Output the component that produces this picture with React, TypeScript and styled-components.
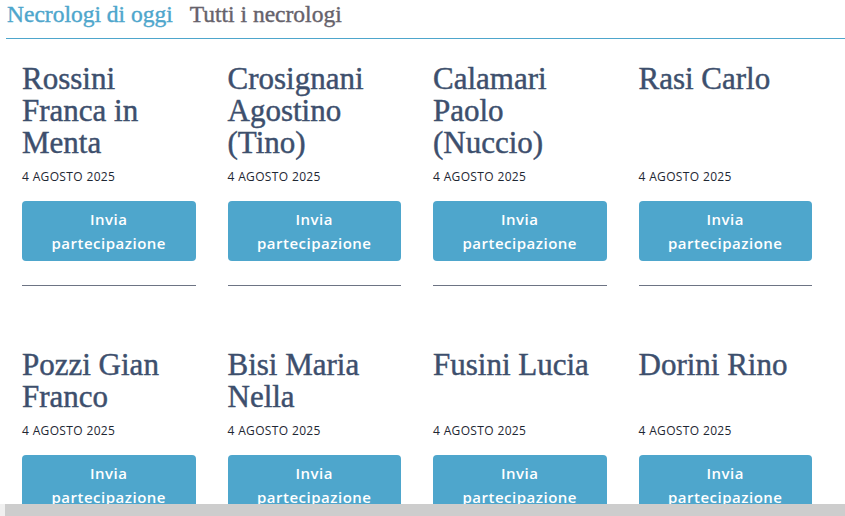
import React from "react";
import styled, { createGlobalStyle } from "styled-components";

const GlobalStyle = createGlobalStyle`
  html, body {
    margin: 0;
    padding: 0;
    background: #ffffff;
    overflow: hidden;
  }
  * {
    box-sizing: border-box;
  }
`;

const necrologi = [
  "Rossini Franca in Menta",
  "Crosignani Agostino (Tino)",
  "Calamari Paolo (Nuccio)",
  "Rasi Carlo",
  "Pozzi Gian Franco",
  "Bisi Maria Nella",
  "Fusini Lucia",
  "Dorini Rino",
];

const App = () => {
  return (
    <>
      <GlobalStyle />
      <Page>
        <Tabs>
          <Tab active>Necrologi di oggi</Tab>
          <Tab>Tutti i necrologi</Tab>
        </Tabs>
        <Grid>
          {necrologi.map((name) => (
            <Card key={name}>
              <Name>{name}</Name>
              <DateLabel>4 agosto 2025</DateLabel>
              <SendButton>Invia partecipazione</SendButton>
              <Divider />
            </Card>
          ))}
        </Grid>
      </Page>
      <ScrollBar>
        <ScrollCorner />
      </ScrollBar>
    </>
  );
};

const Page = styled.div`
  padding: 0 0 0 6px;
`;

const Tabs = styled.div`
  display: flex;
  align-items: baseline;
  gap: 17px;
  padding: 0 0 10px 1px;
  border-bottom: 1px solid #4ea6cc;
`;

const Tab = styled.span<{ active?: boolean }>`
  font-family: "Liberation Serif", "DejaVu Serif", serif;
  font-size: 23.5px;
  line-height: 28px;
  color: ${(p) => (p.active ? "#4ea6cc" : "#66626b")};
  -webkit-text-stroke: 0.4px ${(p) => (p.active ? "#4ea6cc" : "#66626b")};
  cursor: pointer;
`;

const Grid = styled.div`
  display: grid;
  grid-template-columns: repeat(4, 205.5px);
  row-gap: 63px;
  padding-top: 24px;
`;

const Card = styled.div`
  display: flex;
  flex-direction: column;
  padding: 0 16px;
`;

const Name = styled.h2`
  flex: 1;
  margin: 0 0 10px 0;
  font-family: "Liberation Serif", "DejaVu Serif", serif;
  font-weight: 400;
  font-size: 31px;
  line-height: 32px;
  color: #3d4f6d;
  -webkit-text-stroke: 0.45px #3d4f6d;
`;

const DateLabel = styled.div`
  font-family: "Open Sans", "Liberation Sans", sans-serif;
  font-size: 12px;
  line-height: 16px;
  letter-spacing: 0.35px;
  text-transform: uppercase;
  color: #1e2733;
  margin-bottom: 16px;
`;

const SendButton = styled.button`
  height: 60px;
  width: 100%;
  border: none;
  border-radius: 4px;
  background: #4ea6cc;
  color: #ffffff;
  font-family: "Open Sans", "Liberation Sans", sans-serif;
  font-weight: 600;
  font-size: 15px;
  line-height: 24px;
  letter-spacing: 0.5px;
  padding: 6px 20px;
  cursor: pointer;
`;

const Divider = styled.div`
  margin-top: 24px;
  border-top: 1px solid #6d7484;
`;

const ScrollBar = styled.div`
  position: fixed;
  left: 0;
  right: 0;
  bottom: 0;
  height: 12px;
  background: #cdcdcd;
`;

const ScrollCorner = styled.div`
  width: 5px;
  height: 100%;
  background: #f0f0f0;
`;

export default App;
